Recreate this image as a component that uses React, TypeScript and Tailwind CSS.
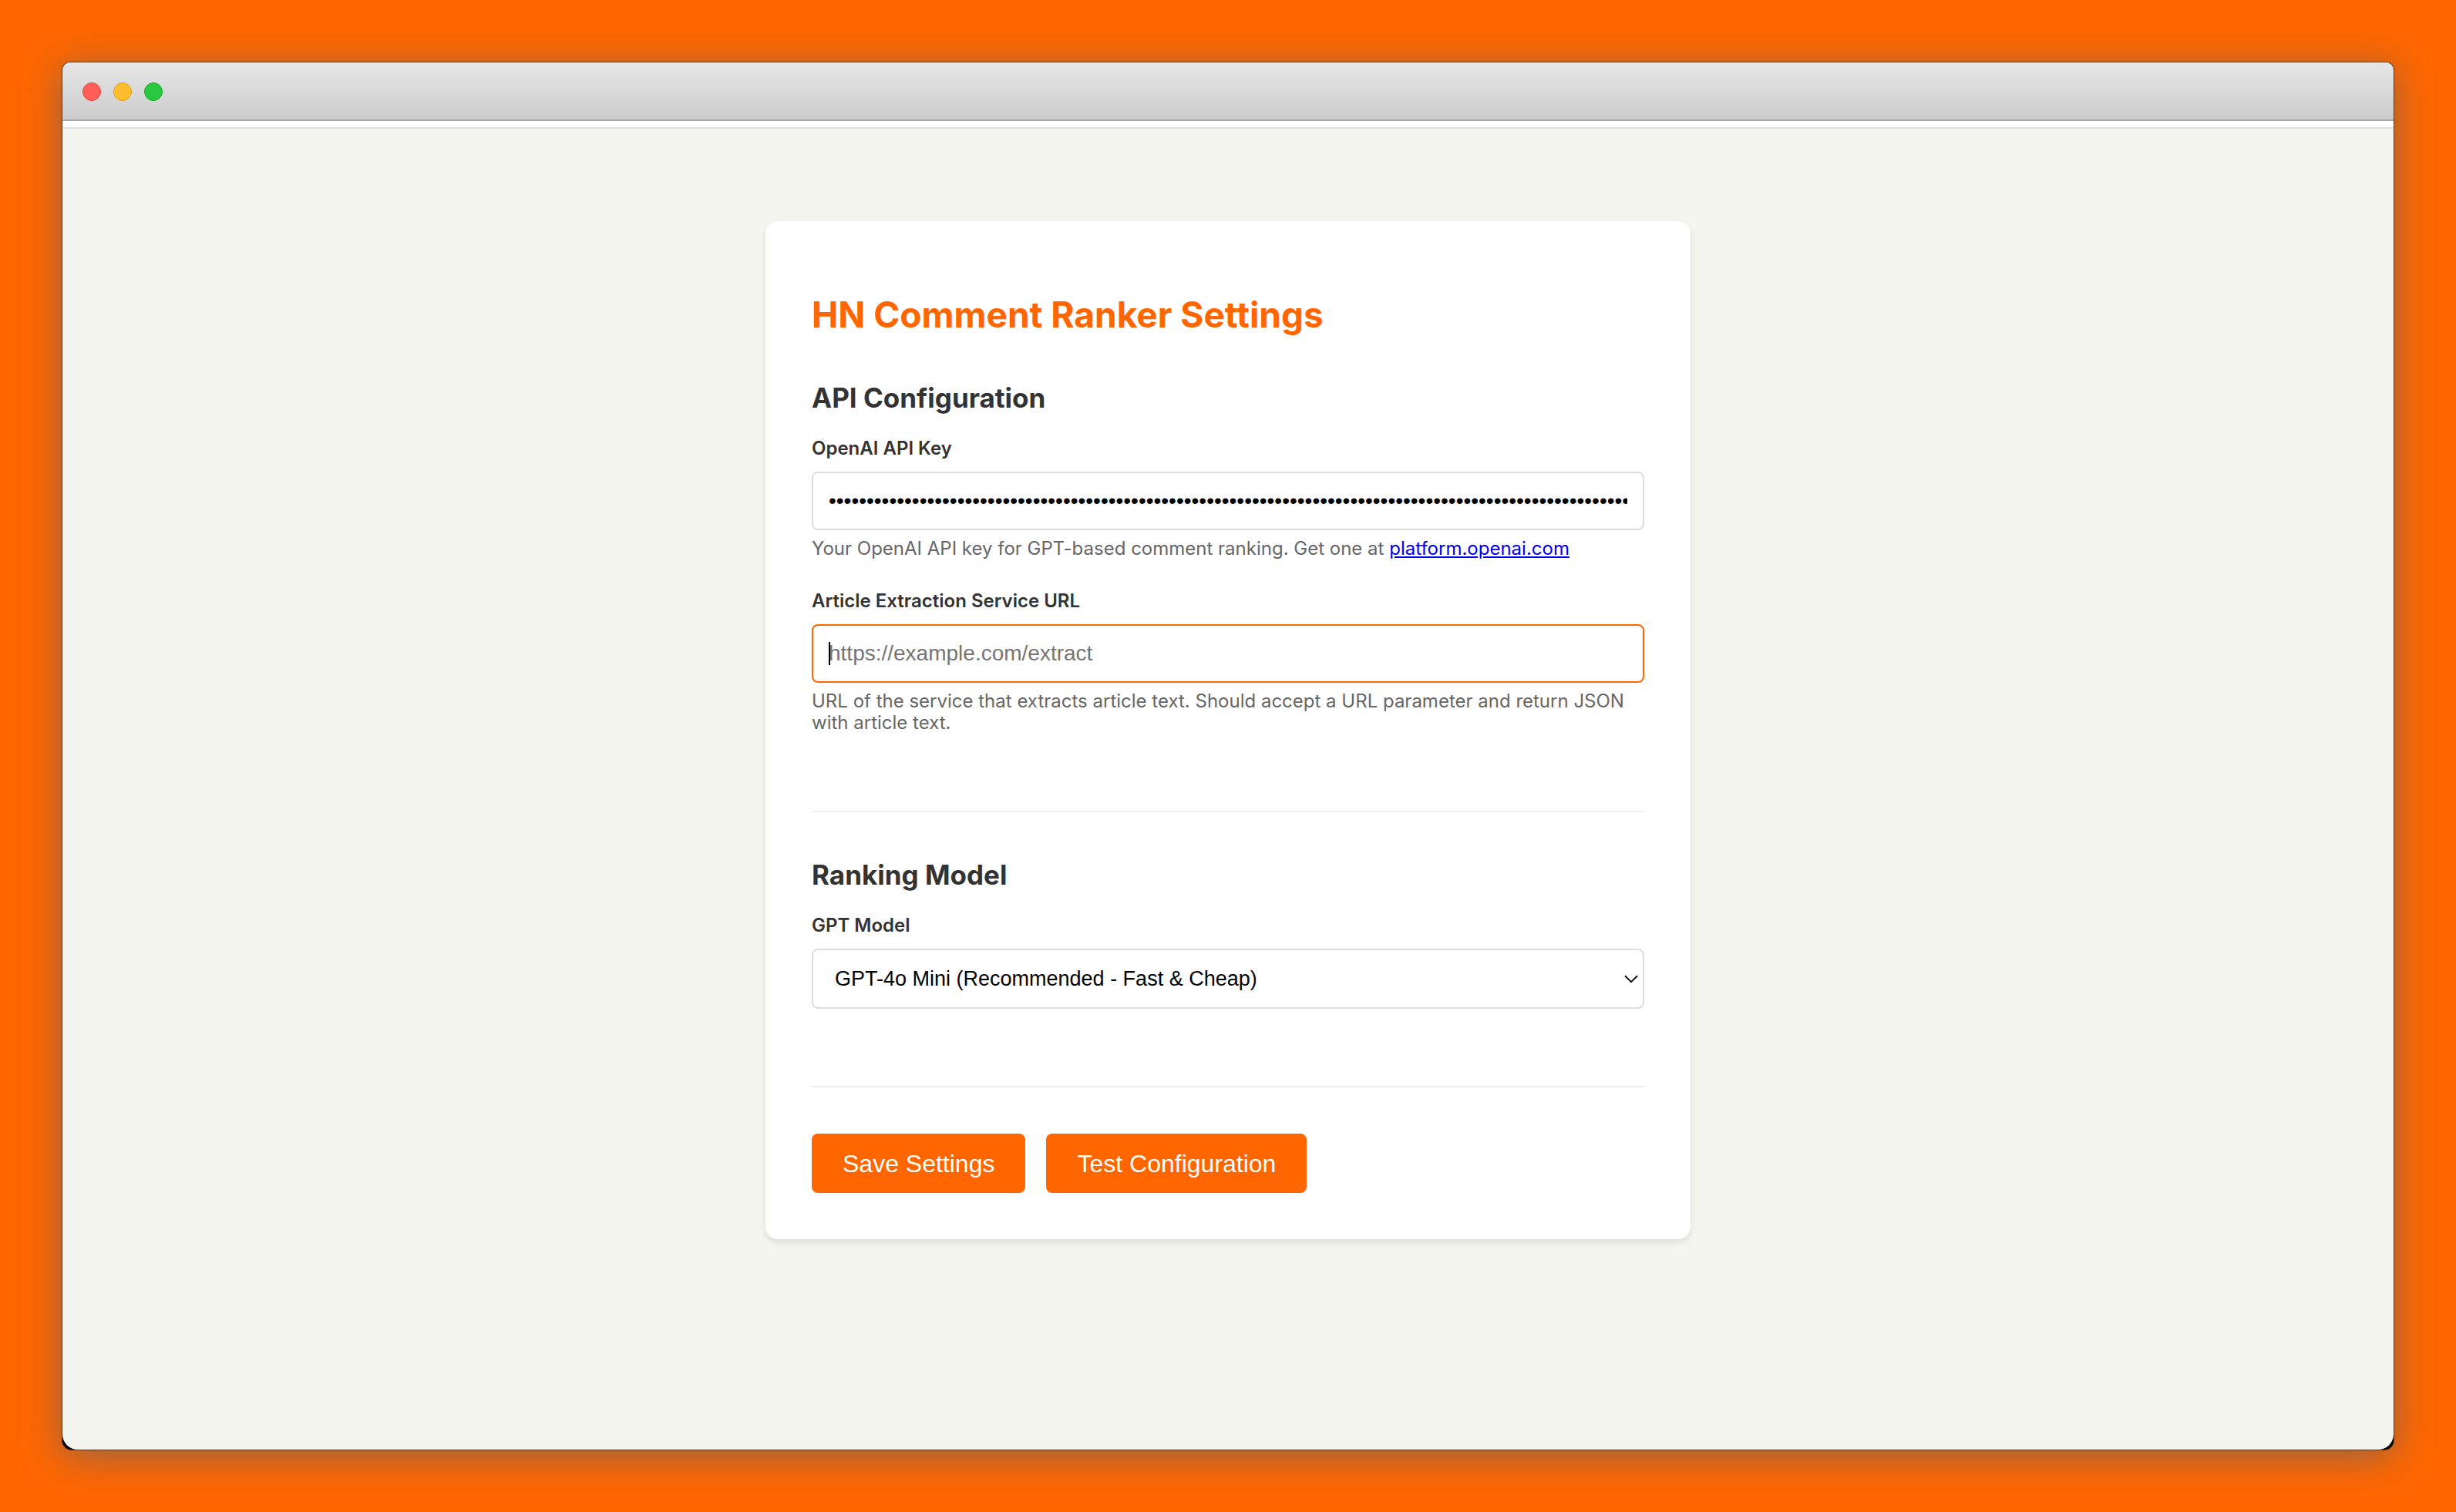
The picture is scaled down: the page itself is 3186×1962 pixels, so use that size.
import { useState, type ReactNode } from "react";

const models = [
  { value: "gpt-4o-mini", label: "GPT-4o Mini (Recommended - Fast & Cheap)" },
  { value: "gpt-4o", label: "GPT-4o" },
  { value: "gpt-4-turbo", label: "GPT-4 Turbo" },
];

const fieldClass =
  "block w-full rounded-lg border-2 bg-white font-['Liberation_Sans',Arial,sans-serif] text-black outline-none";

const buttonClass =
  "h-[77px] rounded-lg bg-[#ff6600] px-10 font-['Liberation_Sans',Arial,sans-serif] text-[32px] leading-9 text-white hover:bg-[#e55c00]";

interface FieldProps {
  id: string;
  label: string;
  help?: ReactNode;
  children: ReactNode;
}

function Field({ id, label, help, children }: FieldProps) {
  return (
    <div className="mb-10">
      <label htmlFor={id} className="mb-4 block text-[24px] leading-7 font-semibold text-[#333333]">
        {label}
      </label>
      {children}
      {help && <p className="mt-2.5 text-[24px] leading-7 text-[#666666]">{help}</p>}
    </div>
  );
}

function Section({ title, children }: { title: string; children: ReactNode }) {
  return (
    <section className="mb-[60px] border-b-2 border-[#eeeeee] pb-[60px]">
      <h2 className="mb-[30px] text-[35px] leading-[43px] font-bold text-[#333333]">{title}</h2>
      {children}
    </section>
  );
}

function TitleBar() {
  return (
    <div className="flex h-[76px] items-center gap-4 rounded-t-[10px] bg-linear-to-b from-[#e6e6e6] to-[#cbcbcb] px-[26px] shadow-[inset_0_1px_0_#f5f5f5,inset_0_-2px_0_#a9a9a9]">
      <span className="size-6 rounded-full border border-[#e2463f] bg-[#ff5f57]" />
      <span className="size-6 rounded-full border border-[#e1a116] bg-[#ffbd2e]" />
      <span className="size-6 rounded-full border border-[#12ac28] bg-[#28c940]" />
    </div>
  );
}

export default function App() {
  const [apiKey, setApiKey] = useState("k".repeat(164));
  const [serviceUrl, setServiceUrl] = useState("");
  const [model, setModel] = useState("gpt-4o-mini");

  return (
    <div className="flex min-h-screen flex-col bg-[#ff6600] p-[81px] font-[Inter,sans-serif]">
      <div className="flex flex-1 flex-col rounded-t-[10px] rounded-b-xl bg-black shadow-[0_0_0_1px_rgba(0,0,0,0.5),0_8px_50px_rgba(102,102,102,0.75)]">
        <TitleBar />
        <div className="h-2.5 border-b-2 border-[#e0e0e0] bg-white" />

        <main className="flex-1 rounded-b-[20px] bg-[#f5f5ef] py-[120px]">
          <div className="mx-auto w-full max-w-[1200px] rounded-2xl bg-white p-[60px] shadow-[0_4px_8px_rgba(0,0,0,0.1)]">
            <h1 className="mt-8 mb-[58px] text-[46px] leading-[58px] font-bold text-[#ff6600]">
              HN Comment Ranker Settings
            </h1>

            <Section title="API Configuration">
              <Field
                id="api-key"
                label="OpenAI API Key"
                help={
                  <>
                    Your OpenAI API key for GPT-based comment ranking. Get one at{" "}
                    <a href="https://platform.openai.com" className="text-[#0000ee] underline">
                      platform.openai.com
                    </a>
                  </>
                }
              >
                <input
                  id="api-key"
                  type="password"
                  value={apiKey}
                  onChange={(e) => setApiKey(e.target.value)}
                  className={`${fieldClass} h-[76px] border-[#dddddd] px-5 text-[28px]`}
                />
              </Field>

              <Field
                id="service-url"
                label="Article Extraction Service URL"
                help="URL of the service that extracts article text. Should accept a URL parameter and return JSON with article text."
              >
                <div className="relative flex items-center">
                  <input
                    id="service-url"
                    type="url"
                    value={serviceUrl}
                    onChange={(e) => setServiceUrl(e.target.value)}
                    placeholder="https://example.com/extract"
                    className={`${fieldClass} h-[76px] border-[#ff6600] px-5 text-[28px] placeholder:text-[#757575]`}
                  />
                  {!serviceUrl && <span className="pointer-events-none absolute left-[22px] h-[30px] w-0.5 bg-black" />}
                </div>
              </Field>
            </Section>

            <Section title="Ranking Model">
              <Field id="gpt-model" label="GPT Model">
                <div className="relative flex items-center">
                  <select
                    id="gpt-model"
                    value={model}
                    onChange={(e) => setModel(e.target.value)}
                    className={`${fieldClass} h-[78px] appearance-none border-[#dddddd] px-7 text-[27px]`}
                  >
                    {models.map((m) => (
                      <option key={m.value} value={m.value}>
                        {m.label}
                      </option>
                    ))}
                  </select>
                  <svg
                    viewBox="0 0 18 11"
                    className="pointer-events-none absolute right-2 h-[11px] w-[18px]"
                    fill="none"
                    stroke="#111111"
                    strokeWidth="2"
                  >
                    <path d="M1 1.2 9 9.2l8-8" />
                  </svg>
                </div>
              </Field>
            </Section>

            <div className="flex gap-[27px]">
              <button type="button" className={buttonClass}>
                Save Settings
              </button>
              <button type="button" className={buttonClass}>
                Test Configuration
              </button>
            </div>
          </div>
        </main>
      </div>
    </div>
  );
}
